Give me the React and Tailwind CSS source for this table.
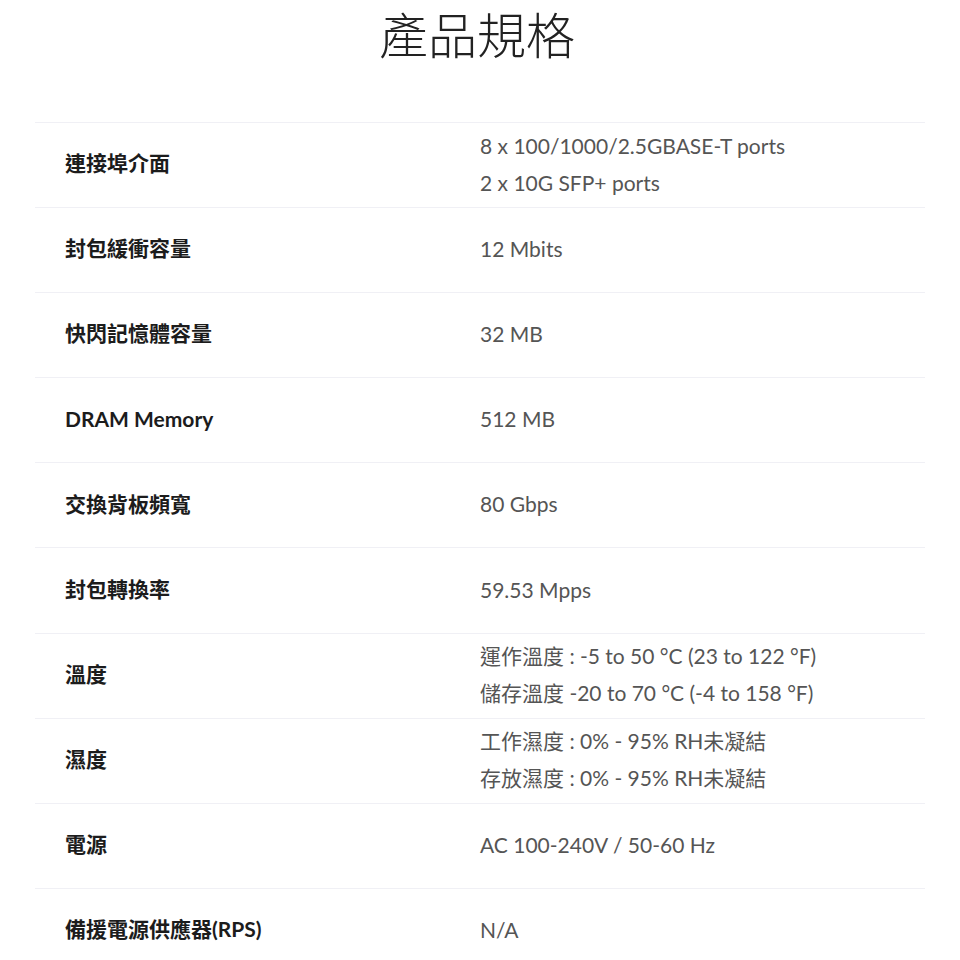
const specs = [
  { label: "連接埠介面", values: ["8 x 100/1000/2.5GBASE-T ports", "2 x 10G SFP+ ports"] },
  { label: "封包緩衝容量", values: ["12 Mbits"] },
  { label: "快閃記憶體容量", values: ["32 MB"] },
  { label: "DRAM Memory", values: ["512 MB"] },
  { label: "交換背板頻寬", values: ["80 Gbps"] },
  { label: "封包轉換率", values: ["59.53 Mpps"] },
  { label: "溫度", values: ["運作溫度 : -5 to 50 °C (23 to 122 °F)", "儲存溫度 -20 to 70 °C (-4 to 158 °F)"] },
  { label: "濕度", values: ["工作濕度 : 0% - 95% RH未凝結", "存放濕度 : 0% - 95% RH未凝結"] },
  { label: "電源", values: ["AC 100-240V / 50-60 Hz"] },
  { label: "備援電源供應器(RPS)", values: ["N/A"] },
];

export default function App() {
  return (
    <div
      className="w-[960px] h-[960px] overflow-hidden bg-white"
      style={{ fontFamily: 'Lato, "Noto Sans CJK TC", sans-serif' }}
    >
      {/* Title */}
      <div className="h-[122px] pt-[5px] pr-[6px] text-center">
        <h1 className="text-[49px] leading-[60px] font-light text-[#222]">產品規格</h1>
      </div>

      {/* Spec table */}
      <div className="mx-[35px]">
        {specs.map((row) => (
          <div
            key={row.label}
            className="grid grid-cols-2 h-[85.1px] items-center border-t border-[#f0f0f5]"
          >
            <div className="pl-[30px] -mt-[4px] text-[21px] font-bold text-[#1c1c1c]">{row.label}</div>
            <div className="flex flex-col -mt-[3px] text-[21px] leading-[37px] text-[#555]">
              {row.values.map((v) => (
                <span key={v}>{v}</span>
              ))}
            </div>
          </div>
        ))}
      </div>
    </div>
  );
}
